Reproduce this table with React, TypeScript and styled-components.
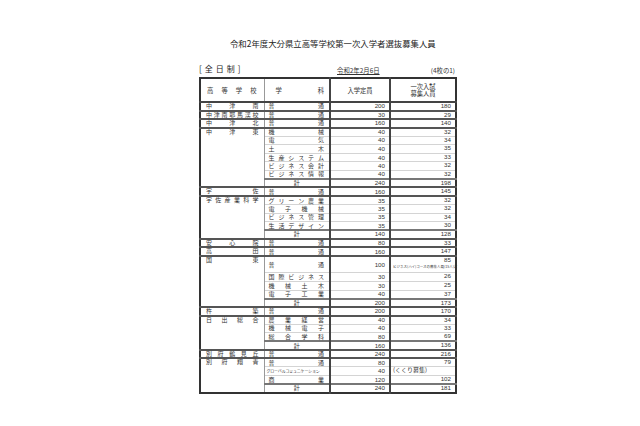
import React from "react";
import styled, { createGlobalStyle } from "styled-components";

type Line = "group" | "thin" | "sum";

interface Row {
  dept: string;
  cap: number;
  quota?: string;
  note?: string;
  tall?: boolean;
}

interface Group {
  school: string;
  rows: Row[];
}

const groups: Group[] = [
  { school: "中津南", rows: [{ dept: "普通", cap: 200, quota: "180" }] },
  { school: "中津南耶馬渓校", rows: [{ dept: "普通", cap: 30, quota: "29" }] },
  { school: "中津北", rows: [{ dept: "普通", cap: 160, quota: "140" }] },
  {
    school: "中津東",
    rows: [
      { dept: "機械", cap: 40, quota: "32" },
      { dept: "電気", cap: 40, quota: "34" },
      { dept: "土木", cap: 40, quota: "35" },
      { dept: "生産システム", cap: 40, quota: "33" },
      { dept: "ビジネス会計", cap: 40, quota: "32" },
      { dept: "ビジネス情報", cap: 40, quota: "32" },
      { dept: "計", cap: 240, quota: "198" },
    ],
  },
  { school: "宇佐", rows: [{ dept: "普通", cap: 160, quota: "145" }] },
  {
    school: "宇佐産業科学",
    rows: [
      { dept: "グリーン農業", cap: 35, quota: "32" },
      { dept: "電子機械", cap: 35, quota: "32" },
      { dept: "ビジネス管理", cap: 35, quota: "34" },
      { dept: "生活デザイン", cap: 35, quota: "30" },
      { dept: "計", cap: 140, quota: "128" },
    ],
  },
  { school: "安心院", rows: [{ dept: "普通", cap: 80, quota: "33" }] },
  { school: "高田", rows: [{ dept: "普通", cap: 160, quota: "147" }] },
  {
    school: "国東",
    rows: [
      {
        dept: "普通",
        cap: 100,
        quota: "85",
        tall: true,
        note: "ビジネス(ハイ)コースの募集人員(15人)含",
      },
      { dept: "国際ビジネス", cap: 30, quota: "26" },
      { dept: "機械土木", cap: 30, quota: "25" },
      { dept: "電子工業", cap: 40, quota: "37" },
      { dept: "計", cap: 200, quota: "173" },
    ],
  },
  { school: "杵築", rows: [{ dept: "普通", cap: 200, quota: "170" }] },
  {
    school: "日出総合",
    rows: [
      { dept: "農業経営", cap: 40, quota: "34" },
      { dept: "機械電子", cap: 40, quota: "33" },
      { dept: "総合学科", cap: 80, quota: "69" },
      { dept: "計", cap: 160, quota: "136" },
    ],
  },
  { school: "別府鶴見丘", rows: [{ dept: "普通", cap: 240, quota: "216" }] },
  {
    school: "別府翔青",
    rows: [
      { dept: "普通", cap: 80, quota: "79" },
      { dept: "グローバルコミュニケーション", cap: 40, note: "(くくり募集)" },
      { dept: "商業", cap: 120, quota: "102" },
      { dept: "計", cap: 240, quota: "181" },
    ],
  },
];

const GlobalStyle = createGlobalStyle`
  html, body {
    margin: 0;
    padding: 0;
    background: #fff;
  }
  body {
    font-family: "Noto Sans CJK JP", "Noto Sans", sans-serif;
    color: #333;
  }
`;

const Page = styled.div`
  width: 256px;
  padding: 37px 0 0 199px;
`;

const Title = styled.h1`
  margin: 0 0 0 31px;
  font-size: 8.4px;
  line-height: 12px;
  font-weight: 400;
  white-space: nowrap;
  color: #222;
`;

const SubHead = styled.div`
  display: flex;
  align-items: flex-end;
  height: 14px;
  margin-top: 14px;
`;

const Division = styled.div`
  width: 138px;
  flex-shrink: 0;
  font-size: 8px;
  line-height: 10px;
  letter-spacing: 3px;
  padding-bottom: 3px;
  color: #222;
`;

const DateText = styled.div`
  font-size: 6.4px;
  line-height: 8px;
  text-decoration: underline;
  padding-bottom: 2px;
`;

const SheetNo = styled.div`
  margin-left: auto;
  font-size: 6.4px;
  line-height: 8px;
  padding-bottom: 2px;
`;

const Table = styled.table`
  width: 256px;
  table-layout: fixed;
  border-collapse: collapse;
  border: 2px solid #333;
`;

const lineStyle = (line: Line) => {
  if (line === "group") return "2px solid #555";
  if (line === "sum") return "2px solid #777";
  return "1px solid #d4d4d4";
};

const HeadCell = styled.th<{ $edge: "thin" | "thick" | "none" }>`
  height: 22px;
  padding: 0;
  font-size: 6.3px;
  line-height: 7px;
  font-weight: 400;
  border-bottom: 2px solid #444;
  border-left: ${({ $edge }) =>
    $edge === "thick" ? "2px solid #444" : $edge === "thin" ? "1px solid #999" : "none"};
  vertical-align: middle;
`;

const BodyRow = styled.tr<{ $tall?: boolean }>`
  height: ${({ $tall }) => ($tall ? "17.1px" : "8.55px")};
`;

const SchoolCell = styled.td`
  padding: 0;
  vertical-align: top;
  border-top: 2px solid #555;
  font-size: 6px;
  line-height: 6.5px;
`;

const DeptCell = styled.td<{ $line: Line }>`
  padding: 0;
  border-top: ${({ $line }) => lineStyle($line)};
  border-left: 1px solid #999;
  font-size: 6px;
  line-height: 6px;
  vertical-align: middle;
`;

const NumCell = styled.td<{ $line: Line }>`
  padding: 0 4px 0 0;
  border-top: ${({ $line }) => lineStyle($line)};
  border-left: 2px solid #444;
  font-family: "Liberation Sans", Arial, sans-serif;
  font-size: 6.2px;
  line-height: 6px;
  text-align: right;
  vertical-align: middle;
`;

const QuotaCell = styled(NumCell)`
  vertical-align: top;
`;

const Spread = styled.div<{ $pad?: string }>`
  display: flex;
  justify-content: space-between;
  padding: ${({ $pad }) => $pad ?? "0 5px 0 4px"};
  white-space: nowrap;
`;

const Center = styled.div`
  text-align: center;
`;

const Condensed = styled.div`
  font-size: 4px;
  line-height: 6px;
  white-space: nowrap;
  letter-spacing: -0.2px;
  padding-left: 2px;
  overflow: hidden;
`;

const HeadStack = styled.div`
  text-align: center;
  line-height: 7.5px;
`;

const NoteTop = styled.div`
  text-align: right;
  line-height: 6.5px;
`;

const Note = styled.div<{ $size: "tiny" | "small" }>`
  text-align: left;
  white-space: nowrap;
  font-family: "Noto Sans CJK JP", sans-serif;
  font-size: ${({ $size }) => ($size === "tiny" ? "3.5px" : "6px")};
  line-height: ${({ $size }) => ($size === "tiny" ? "7px" : "6px")};
  padding-left: 2px;
  margin-right: -4px;
`;

const chars = (s: string) => Array.from(s).map((c, i) => <span key={i}>{c}</span>);

const DeptLabel = ({ dept }: { dept: string }) => {
  if (dept === "計") return <Center>計</Center>;
  if (dept.length > 8) return <Condensed>{dept}</Condensed>;
  return <Spread>{chars(dept)}</Spread>;
};

const Quota = ({ row }: { row: Row }) => {
  if (row.note && row.quota) {
    return (
      <>
        <NoteTop>{row.quota}</NoteTop>
        <Note $size="tiny">{row.note}</Note>
      </>
    );
  }
  if (row.note) return <Note $size="small">{row.note}</Note>;
  return <NoteTop>{row.quota}</NoteTop>;
};

export default function App() {
  return (
    <>
      <GlobalStyle />
      <Page>
        <Title>令和2年度大分県立高等学校第一次入学者選抜募集人員</Title>
        <SubHead>
          <Division>[全日制]</Division>
          <DateText>令和2年2月6日</DateText>
          <SheetNo>(4枚の1)</SheetNo>
        </SubHead>
        <Table>
          <colgroup>
            <col style={{ width: 64 }} />
            <col style={{ width: 66 }} />
            <col style={{ width: 60 }} />
            <col style={{ width: 66 }} />
          </colgroup>
          <thead>
            <tr>
              <HeadCell $edge="none">
                <Spread $pad="0 7px 0 6px">{chars("高等学校")}</Spread>
              </HeadCell>
              <HeadCell $edge="thin">
                <Spread $pad="0 5px 0 11px">{chars("学科")}</Spread>
              </HeadCell>
              <HeadCell $edge="thick">入学定員</HeadCell>
              <HeadCell $edge="thick">
                <HeadStack>
                  一次入試
                  <br />
                  募集人員
                </HeadStack>
              </HeadCell>
            </tr>
          </thead>
          <tbody>
            {groups.map((g) =>
              g.rows.map((r, i) => {
                const line: Line = i === 0 ? "group" : r.dept === "計" ? "sum" : "thin";
                return (
                  <BodyRow key={g.school + i} $tall={r.tall}>
                    {i === 0 && (
                      <SchoolCell rowSpan={g.rows.length}>
                        <Spread $pad="0 5px 0 5px">{chars(g.school)}</Spread>
                      </SchoolCell>
                    )}
                    <DeptCell $line={line}>
                      <DeptLabel dept={r.dept} />
                    </DeptCell>
                    <NumCell $line={line}>{r.cap}</NumCell>
                    <QuotaCell $line={line}>
                      <Quota row={r} />
                    </QuotaCell>
                  </BodyRow>
                );
              })
            )}
          </tbody>
        </Table>
      </Page>
    </>
  );
}
